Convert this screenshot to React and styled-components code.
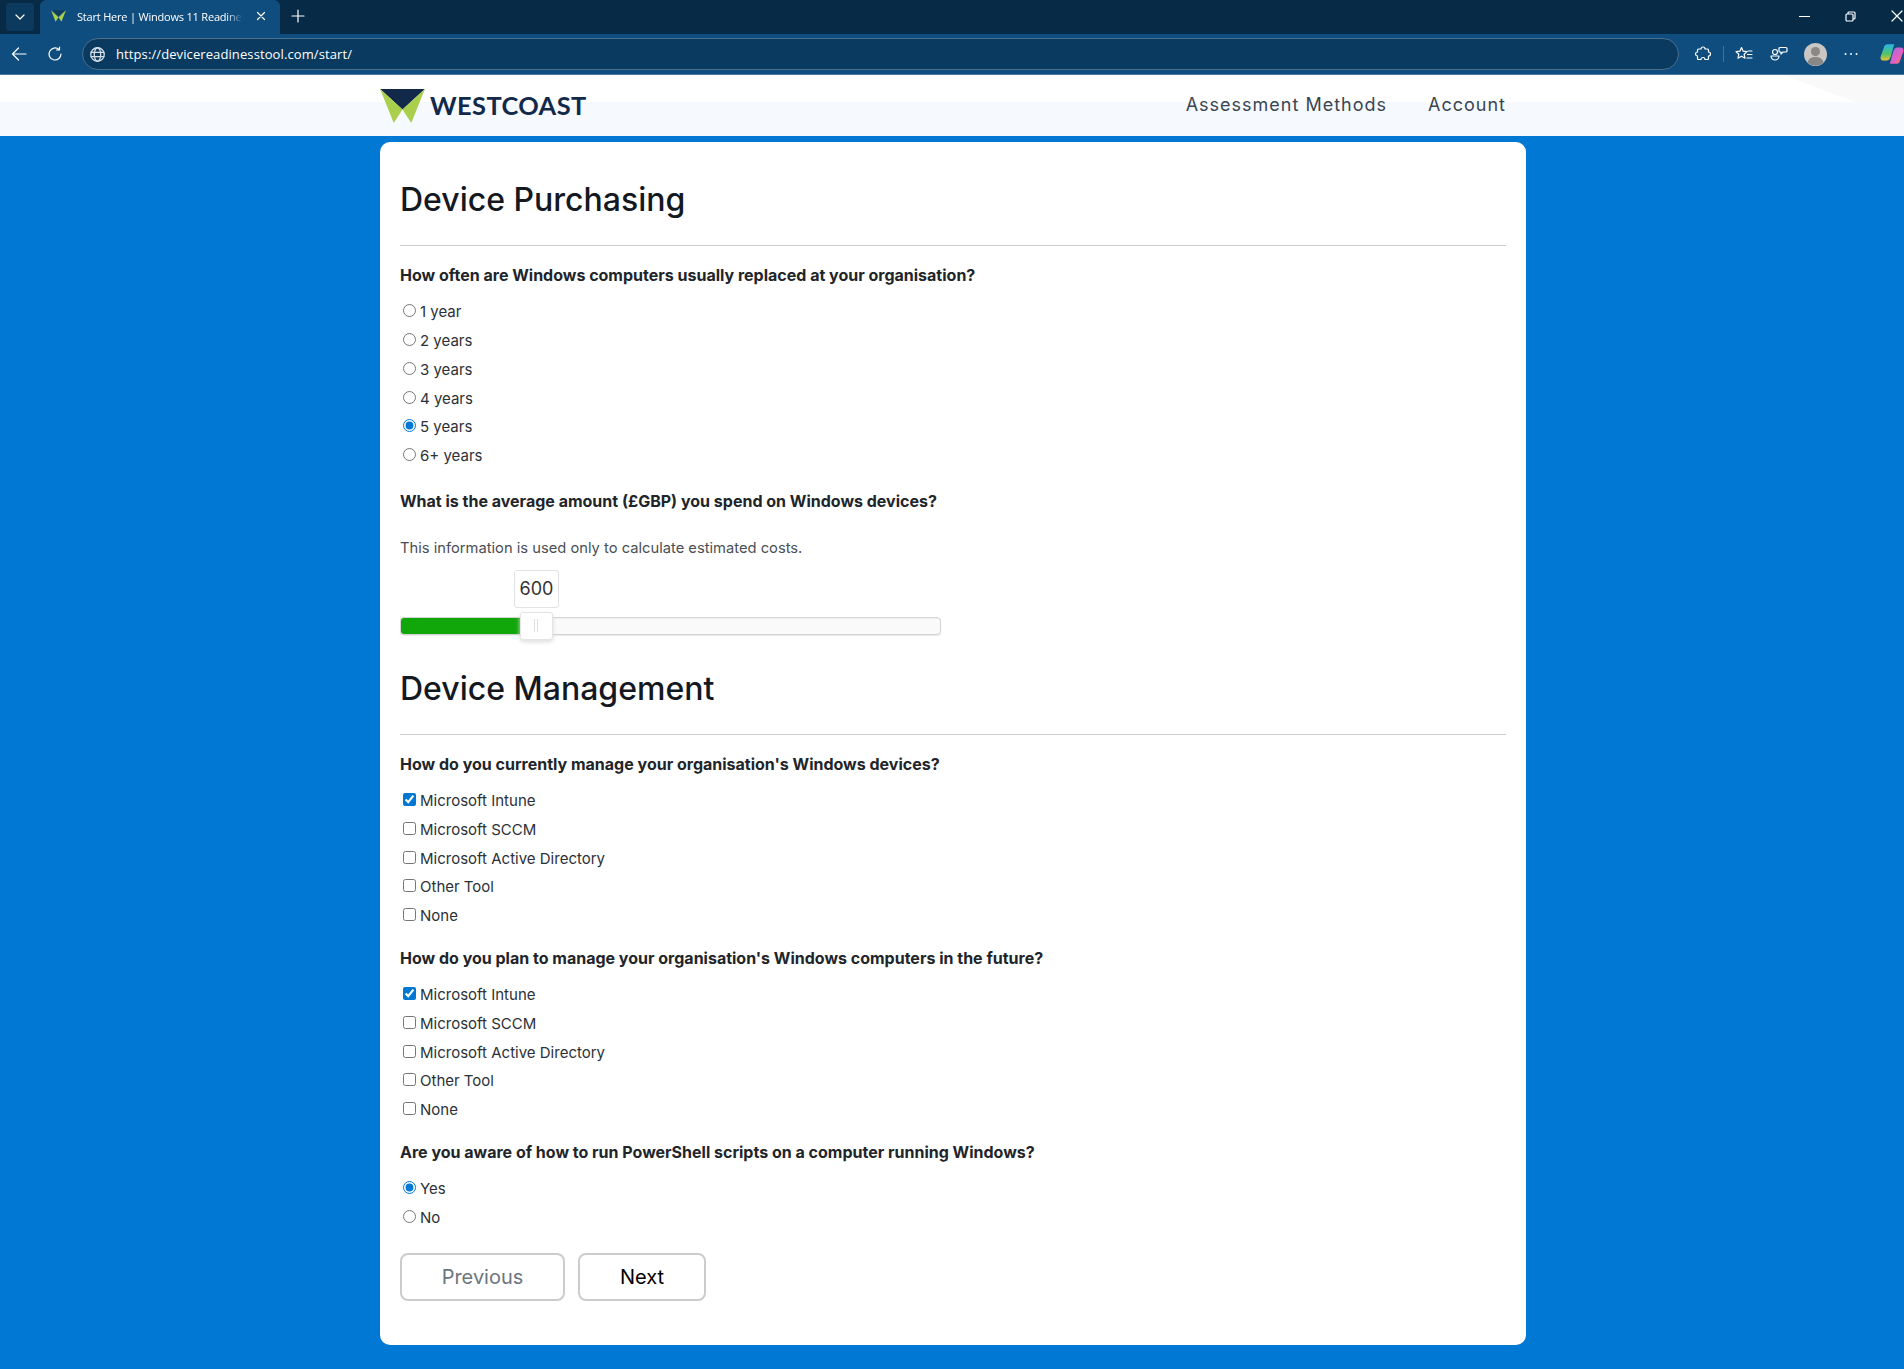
import styled, { createGlobalStyle } from 'styled-components';

const GlobalStyle = createGlobalStyle`
  html, body {
    margin: 0;
    padding: 0;
    background: #0078d4;
  }
  * { box-sizing: border-box; }
  body {
    font-family: Inter, "Liberation Sans", sans-serif;
    color: #212529;
    overflow: hidden;
  }
`;

const Page = styled.div`
  width: 1904px;
  height: 1369px;
  overflow: hidden;
  background: #0078d4;
`;

/* browser chrome */
const TabStrip = styled.div`
  height: 34px;
  background: #072a47;
  display: flex;
  align-items: flex-start;
  padding-left: 6px;
  color: #fff;
  font-family: "Open Sans", "Liberation Sans", sans-serif;
`;

const TabMenu = styled.div`
  width: 28px;
  height: 28px;
  margin-top: 3px;
  background: #0b3a5e;
  border-radius: 4px;
  display: flex;
  align-items: center;
  justify-content: center;
`;

const Tab = styled.div`
  width: 240px;
  height: 34px;
  margin-left: 6px;
  background: #0e4d7e;
  border-radius: 6px 6px 0 0;
  display: flex;
  align-items: center;
  padding: 0 14px 2px 11px;
  gap: 11px;
`;

const TabTitle = styled.span`
  flex: 1;
  font-size: 11px;
  white-space: nowrap;
  overflow: hidden;
  letter-spacing: -0.2px;
  margin-right: 2px;
  mask-image: linear-gradient(to right, #000 90%, transparent);
`;

const NewTab = styled.div`
  width: 36px;
  height: 32px;
  display: flex;
  align-items: center;
  justify-content: center;
`;

const WindowControls = styled.div`
  margin-left: auto;
  display: flex;
  align-items: center;
  height: 32px;
  gap: 35px;
  padding-right: 1px;
`;

const Toolbar = styled.div`
  height: 41px;
  background: #0e4d7e;
  border-bottom: 1px solid #4a7699;
  display: flex;
  align-items: center;
  padding-left: 11px;
  color: #fff;
  overflow: hidden;
`;

const NavIcons = styled.div`
  display: flex;
  align-items: center;
  gap: 20px;
  width: 71px;
`;

const AddressBar = styled.div`
  width: 1597px;
  height: 32px;
  background: #0a3a60;
  border: 1px solid #48708f;
  border-radius: 16px;
  display: flex;
  align-items: center;
  padding-left: 7px;
  gap: 11px;
  flex: none;
`;

const Url = styled.span`
  font-family: "Open Sans", "Liberation Sans", sans-serif;
  font-size: 13px;
  letter-spacing: 0.1px;
`;

const ToolIcons = styled.div`
  display: flex;
  align-items: center;
  margin-left: 16px;
  gap: 16.5px;
  flex: none;
`;

const ToolSep = styled.div`
  width: 1px;
  height: 16px;
  background: #46708f;
  margin: 0 -5px;
`;

/* site */
const SiteHeader = styled.header`
  height: 61px;
  background: linear-gradient(to bottom, #fff 0, #fff 27px, #f6fafe 27px, #f6fafe 100%);
  position: relative;
  display: flex;
  padding-left: 380px;
  &::after {
    content: '';
    position: absolute;
    top: 0;
    right: 0;
    width: 121px;
    height: 27px;
    background: #f9f9f9;
    clip-path: polygon(0 0, 100% 0, 100% 100%, 60% 100%);
  }
`;

const HeaderInner = styled.div`
  width: 1146px;
  display: flex;
  align-items: center;
  justify-content: space-between;
  padding-right: 20px;
`;

const Brand = styled.div`
  display: flex;
  align-items: center;
  gap: 5px;
`;

const BrandName = styled.span`
  font-family: Lato, "Liberation Sans", sans-serif;
  font-size: 25.4px;
  font-weight: 700;
  color: #12294a;
  letter-spacing: 0.4px;
  line-height: 1;
`;

const SiteNav = styled.nav`
  display: flex;
  gap: 41px;
  padding-bottom: 2px;
`;

const NavLink = styled.a`
  font-size: 18px;
  letter-spacing: 1px;
  color: #3a4552;
`;

const Card = styled.main`
  width: 1146px;
  height: 1203px;
  margin: 6px 0 0 380px;
  background: #fff;
  border-radius: 10px;
  padding: 39px 20px 0;
`;

const SectionTitle = styled.h2`
  margin: ${({ $first }) => ($first ? '0' : '35px 0 0')};
  font-size: 32px;
  font-weight: 500;
  line-height: 38px;
  color: #14181f;
`;

const Rule = styled.hr`
  margin: 26px 0 0;
  border: 0;
  border-top: 1px solid #cdcdcd;
`;

const Question = styled.div`
  margin-top: ${({ $gap }) => $gap}px;
  font-size: 16px;
  font-weight: 700;
  line-height: 24px;
  color: #212529;
`;

const Options = styled.div`
  margin: 10.3px 0 -0.3px;
  display: flex;
  flex-direction: column;
`;

const Option = styled.label`
  height: 28.8px;
  display: flex;
  align-items: center;
  font-size: 15px;
  color: #2c3138;
`;

const Native = styled.input`
  width: 13px;
  height: 13px;
  margin: -2px 4px 0 3px;
  accent-color: #0078d4;
`;

const Hint = styled.p`
  margin: 23px 0 0;
  font-size: 14.72px;
  line-height: 24px;
  color: #4a4f55;
`;

const SliderWrap = styled.div`
  width: 541px;
  margin-top: 10px;
`;

const ValueRow = styled.div`
  display: flex;
  padding-left: 114px;
`;

const ValueBox = styled.div`
  width: 45px;
  height: 38px;
  border: 1px solid #e2e2e2;
  border-radius: 3px;
  display: flex;
  align-items: center;
  justify-content: center;
  font-size: 18px;
  color: #333;
`;

const Track = styled.div`
  position: relative;
  margin-top: 9px;
  height: 18px;
  background: #fafafa;
  border: 1px solid #d3d3d3;
  border-radius: 4px;
  box-shadow: inset 0 1px 1px #f0f1f4, 0 1px 1px #ebebeb;
`;

const Fill = styled.div`
  height: 100%;
  background: #11a60a;
  border-radius: 3px 0 0 3px;
`;

const Handle = styled.div`
  position: absolute;
  top: -6px;
  width: 33px;
  height: 28px;
  background: #fff;
  border: 1px solid #e4e4e4;
  border-radius: 3px;
  box-shadow: 0 2px 4px #dedede;
  display: flex;
  justify-content: center;
  align-items: center;
  gap: 2px;
  &::before, &::after {
    content: '';
    width: 1px;
    height: 13px;
    background: #dfdfdf;
  }
`;

const ButtonRow = styled.div`
  margin-top: 22px;
  display: flex;
  gap: 13px;
`;

const NavButton = styled.button`
  width: ${({ $width }) => $width}px;
  height: 48px;
  background: #fff;
  border: 2px solid #cccccc;
  border-radius: 8px;
  font-family: Inter, "Liberation Sans", sans-serif;
  font-size: 20px;
  color: ${({ $muted }) => ($muted ? '#6c757d' : '#000')};
`;

const Stroke = styled.svg`
  display: block;
  flex: none;
  fill: none;
  stroke: ${({ $color }) => $color || '#fff'};
  stroke-width: 1.2;
  stroke-linecap: round;
  stroke-linejoin: round;
`;

const MoreIcon = styled(Stroke)`
  margin-right: 6px;
`;

const WestcoastMark = ({ size = 46 }) => (
  <svg width={size} height={size * 0.8} viewBox="0 0 46 37" style={{ display: 'block', flex: 'none' }}>
    <polygon points="0,1 46,1 23,22" fill="#12294a" />
    <polygon points="0,1 23,22 14,36" fill="#a9cf4c" />
    <polygon points="46,1 23,22 32,36" fill="#a9cf4c" />
  </svg>
);

const Copilot = () => (
  <svg width="24" height="24" viewBox="0 0 22 22" style={{ display: 'block', flex: 'none' }}>
    <defs>
      <linearGradient id="cpA" x1="0" y1="0" x2="0" y2="1">
        <stop offset="0" stopColor="#29b6e8" />
        <stop offset="0.6" stopColor="#4fc36a" />
        <stop offset="1" stopColor="#f2c230" />
      </linearGradient>
      <linearGradient id="cpB" x1="0" y1="0" x2="1" y2="1">
        <stop offset="0" stopColor="#9b6cf0" />
        <stop offset="0.6" stopColor="#e45fc0" />
        <stop offset="1" stopColor="#f5824a" />
      </linearGradient>
    </defs>
    <path d="M7 2h6l-3 11c-.6 2-2 4-4 4H3C1 17 0 15 .7 13L4 4c.5-1.300 1.600-2 3-2z" fill="url(#cpA)" />
    <path d="M15 20H9l3-11c.6-2 2-4 4-4h3c2 0 3 2 2.300 4L18 18c-.5 1.300-1.600 2-3 2z" fill="url(#cpB)" />
  </svg>
);

const purchaseYears = ['1 year', '2 years', '3 years', '4 years', '5 years', '6+ years'];
const tools = ['Microsoft Intune', 'Microsoft SCCM', 'Microsoft Active Directory', 'Other Tool', 'None'];
const sliderPct = 22;

const OptionList = ({ type, name, items, checked }) => (
  <Options>
    {items.map((item) => (
      <Option key={item}>
        <Native type={type} name={name} defaultChecked={item === checked} />
        {item}
      </Option>
    ))}
  </Options>
);

const BrowserChrome = () => (
  <>
    <TabStrip>
      <TabMenu>
        <Stroke width="12" height="12" viewBox="0 0 12 12"><path d="M2 4l4 4 4-4" /></Stroke>
      </TabMenu>
      <Tab>
        <svg width="15" height="12" viewBox="0 0 46 37" style={{ display: 'block', flex: 'none' }}>
          <polygon points="0,1 23,22 14,36" fill="#a9cf4c" />
          <polygon points="46,1 23,22 32,36" fill="#a9cf4c" />
          <polygon points="4,1 42,1 23,18" fill="#123a5c" />
        </svg>
        <TabTitle>Start Here | Windows 11 Readiness</TabTitle>
        <Stroke width="10" height="10" viewBox="0 0 10 10"><path d="M1.500 1.500l7 7M8.500 1.500l-7 7" /></Stroke>
      </Tab>
      <NewTab>
        <Stroke width="14" height="14" viewBox="0 0 14 14"><path d="M7 1v12M1 7h12" /></Stroke>
      </NewTab>
      <WindowControls>
        <Stroke width="11" height="11" viewBox="0 0 11 11"><path d="M0.500 5.500h10" /></Stroke>
        <Stroke width="11" height="11" viewBox="0 0 11 11"><path d="M3 2.500V2a1 1 0 0 1 1-1h5a1 1 0 0 1 1 1v5a1 1 0 0 1-1 1h-.5M1 4a1 1 0 0 1 1-1h5a1 1 0 0 1 1 1v5a1 1 0 0 1-1 1H2a1 1 0 0 1-1-1z" /></Stroke>
        <Stroke width="12" height="12" viewBox="0 0 12 12"><path d="M1 1l10 10M11 1L1 11" /></Stroke>
      </WindowControls>
    </TabStrip>
    <Toolbar>
      <NavIcons>
        <Stroke width="16" height="16" viewBox="0 0 16 16"><path d="M15 8H1.500M7.500 2l-6 6 6 6" /></Stroke>
        <Stroke width="16" height="16" viewBox="0 0 16 16"><path d="M14 8a6 6 0 1 1-2-4.500M12.500 1v3h-3" /></Stroke>
      </NavIcons>
      <AddressBar>
        <Stroke $color="#d5dee6" width="15" height="15" viewBox="0 0 14 14">
          <circle cx="7" cy="7" r="6.300" />
          <ellipse cx="7" cy="7" rx="3" ry="6.300" />
          <path d="M1 5h12M1 9h12" />
        </Stroke>
        <Url>https://devicereadinesstool.com/start/</Url>
      </AddressBar>
      <ToolIcons>
        <Stroke width="16" height="16" viewBox="0 0 16 16"><path d="M6 3a2 2 0 0 1 4 0h2.500a1 1 0 0 1 1 1v2a2 2 0 0 1 0 4v2.500a1 1 0 0 1-1 1H10a2 2 0 0 0-4 0H3.500a1 1 0 0 1-1-1V10a2 2 0 0 1 0-4V4a1 1 0 0 1 1-1z" /></Stroke>
        <ToolSep />
        <Stroke width="18" height="16" viewBox="0 0 18 16"><path d="M6.500 1.500l1.700 3.700 3.800.4-2.900 2.600.9 4-3.500-2-3.500 2 .8-4L1 5.600l3.900-.4zM13 5h4M12.500 8.500H17M12 12h5" /></Stroke>
        <Stroke width="18" height="16" viewBox="0 0 18 16"><circle cx="5" cy="6" r="2.500" /><path d="M1 10h8a4 4 0 0 1-8 0zM9 2.500a1 1 0 0 1 1-1h6a1 1 0 0 1 1 1V5a1 1 0 0 1-1 1h-3l-2 2V6h-1a1 1 0 0 1-1-1z" /></Stroke>
        <svg width="23" height="23" viewBox="0 0 23 23" style={{ display: 'block', flex: 'none' }}>
          <circle cx="11.500" cy="11.500" r="11.500" fill="#c9c6c4" />
          <circle cx="11.500" cy="8.500" r="4.500" fill="#8a8886" />
          <path d="M3.500 19.500c1-4 4-5.500 8-5.500s7 1.500 8 5.500a11.500 11.500 0 0 1-16 0z" fill="#8a8886" />
        </svg>
        <MoreIcon width="14" height="14" viewBox="0 0 14 14">
          <path d="M1.500 7h.1M7 7h.1M12.500 7h.1" strokeWidth="1.800" />
        </MoreIcon>
        <Copilot />
      </ToolIcons>
    </Toolbar>
  </>
);

export default function App() {
  return (
    <Page>
      <GlobalStyle />
      <BrowserChrome />
      <SiteHeader>
        <HeaderInner>
          <Brand>
            <WestcoastMark size={45} />
            <BrandName>WESTCOAST</BrandName>
          </Brand>
          <SiteNav>
            <NavLink>Assessment Methods</NavLink>
            <NavLink>Account</NavLink>
          </SiteNav>
        </HeaderInner>
      </SiteHeader>
      <Card>
        <SectionTitle $first>Device Purchasing</SectionTitle>
        <Rule />
        <Question $gap={17}>How often are Windows computers usually replaced at your organisation?</Question>
        <OptionList type="radio" name="replace" items={purchaseYears} checked="5 years" />
        <Question $gap={19}>What is the average amount (£GBP) you spend on Windows devices?</Question>
        <Hint>This information is used only to calculate estimated costs.</Hint>
        <SliderWrap>
          <ValueRow><ValueBox>600</ValueBox></ValueRow>
          <Track>
            <Fill style={{ width: `${sliderPct}%` }} />
            <Handle style={{ left: `${sliderPct}%` }} />
          </Track>
        </SliderWrap>
        <SectionTitle>Device Management</SectionTitle>
        <Rule />
        <Question $gap={17}>How do you currently manage your organisation's Windows devices?</Question>
        <OptionList type="checkbox" name="current" items={tools} checked="Microsoft Intune" />
        <Question $gap={16}>How do you plan to manage your organisation's Windows computers in the future?</Question>
        <OptionList type="checkbox" name="future" items={tools} checked="Microsoft Intune" />
        <Question $gap={16}>Are you aware of how to run PowerShell scripts on a computer running Windows?</Question>
        <OptionList type="radio" name="powershell" items={['Yes', 'No']} checked="Yes" />
        <ButtonRow>
          <NavButton $muted $width={165}>Previous</NavButton>
          <NavButton $width={128}>Next</NavButton>
        </ButtonRow>
      </Card>
    </Page>
  );
}
